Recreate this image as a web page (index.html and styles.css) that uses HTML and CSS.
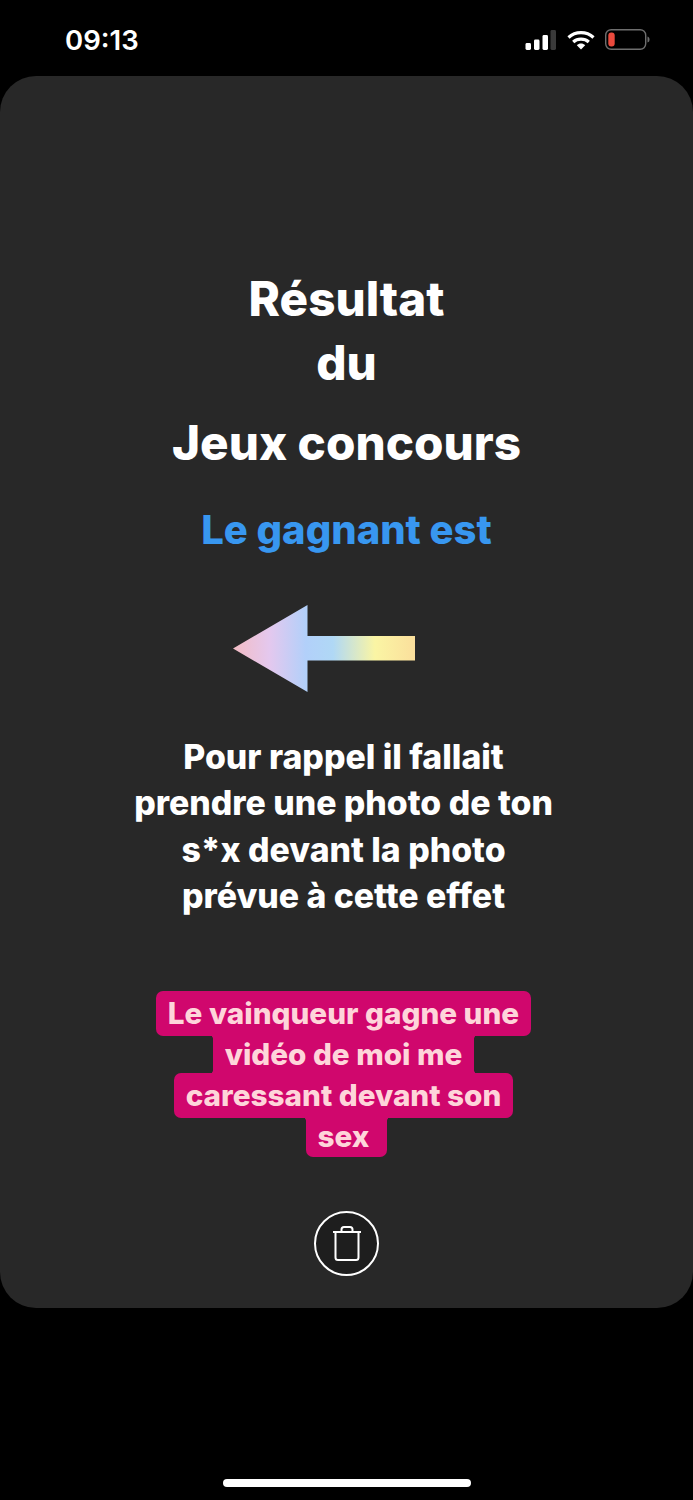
FILE: index.html
```html
<!DOCTYPE html>
<html lang="fr">
<head>
    <meta charset="UTF-8">
    <title>Résultat du Jeux concours</title>
    <meta name="viewport" content="width=device-width, initial-scale=1.0">
    <link rel="stylesheet" href="styles.css">
</head>
<body>
    <div class="status-bar">
        <span class="time">09:13</span>
        <div class="status-icons">
            <svg class="signal" width="32" height="20" viewBox="0 0 32 20">
                <rect x="0.500" y="13" width="5.500" height="7" rx="1.400" fill="#fff"/>
                <rect x="9" y="9.500" width="5.500" height="10.500" rx="1.400" fill="#fff"/>
                <rect x="17.500" y="5" width="5.500" height="15" rx="1.400" fill="#fff"/>
                <rect x="25.500" y="0" width="5.500" height="20" rx="1.400" fill="#3a3a3a"/>
            </svg>
            <svg class="wifi" width="28" height="20" viewBox="0 0 28 20">
                <path d="M1.500 7.500C8.500 1 19.500 1 26.500 7.500" fill="none" stroke="#fff" stroke-width="3.200"/>
                <path d="M6.200 12C10.500 8.200 17.500 8.200 21.800 12" fill="none" stroke="#fff" stroke-width="3.200"/>
                <path d="M9.800 15.200L14 19.600L18.200 15.200C15.800 13 12.200 13 9.800 15.200Z" fill="#fff"/>
            </svg>
            <svg class="battery" width="45" height="21" viewBox="0 0 45 21">
                <rect x="0.700" y="0.700" width="40" height="19.600" rx="5.500" fill="none" stroke="#6e6e6e" stroke-width="1.400"/>
                <rect x="3.300" y="3.500" width="6.400" height="14" rx="3" fill="#ea4a3d"/>
                <path d="M42.500 7.500C44 8 44.500 9 44.500 10.500C44.500 12 44 13 42.500 13.500Z" fill="#6e6e6e"/>
            </svg>
        </div>
    </div>

    <div class="card">
        <h1 class="title">
            <span class="title-line">Résultat</span>
            <span class="title-line">du</span>
            <span class="title-line title-last">Jeux concours</span>
        </h1>
        <h2 class="winner">Le gagnant est</h2>

        <svg class="arrow" width="184" height="90" viewBox="0 0 184 90">
            <defs>
                <linearGradient id="arrowGrad" x1="0" y1="0" x2="1" y2="0">
                    <stop offset="0" stop-color="#f3bcc4"/>
                    <stop offset="0.2" stop-color="#e4c8ee"/>
                    <stop offset="0.4" stop-color="#b2d0fa"/>
                    <stop offset="0.55" stop-color="#b0d8f5"/>
                    <stop offset="0.78" stop-color="#faf5a4"/>
                    <stop offset="1" stop-color="#fbdf9c"/>
                </linearGradient>
            </defs>
            <path d="M1 44.500L75.500 1V32H183V56.500H75.500V88Z" fill="url(#arrowGrad)"/>
        </svg>

        <p class="reminder">
            Pour rappel il fallait<br>
            prendre une photo de ton<br>
            s*x devant la photo<br>
            prévue à cette effet
        </p>

        <div class="prize">
            <div class="prize-line">Le vainqueur gagne une</div>
            <div class="prize-line inset">vidéo de moi me</div>
            <div class="prize-line">caressant devant son</div>
            <div class="prize-line inset inset-last">sex</div>
        </div>

        <button class="delete-btn" type="button" aria-label="Supprimer">
            <svg width="30" height="38" viewBox="0 0 30 38">
                <path d="M1 7H29" fill="none" stroke="#fff" stroke-width="2"/>
                <path d="M3.500 7V32.500C3.500 34 4.500 35 6 35H24C25.500 35 26.500 34 26.500 32.500V7" fill="none" stroke="#fff" stroke-width="2"/>
                <path d="M9.500 7V4.500C9.500 3 10.500 2 12 2H18C19.500 2 20.500 3 20.500 4.500V7" fill="none" stroke="#fff" stroke-width="2"/>
            </svg>
        </button>
    </div>

    <div class="home-area">
        <div class="home-indicator"></div>
    </div>
</body>
</html>
```

FILE: styles.css
```css
body {
    margin: 0;
    width: 693px;
    height: 1500px;
    overflow: hidden;
    background: #000;
    color: #fff;
    font-family: Inter, 'Liberation Sans', sans-serif;
}
.status-bar {
    height: 76px;
    box-sizing: border-box;
    padding: 0 43px 0 65px;
    display: flex;
    justify-content: space-between;
    align-items: flex-start;
}
.time {
    margin-top: 23px;
    font-size: 27.500px;
    line-height: 34px;
    font-weight: 600;
}
.status-icons {
    margin-top: 29px;
    display: flex;
    align-items: center;
    gap: 10px;
}
.card {
    height: 1232px;
    box-sizing: border-box;
    padding-top: 191px;
    background: #282828;
    border-radius: 36px;
    display: flex;
    flex-direction: column;
    align-items: center;
}
.title {
    margin: 0;
    font-size: 47.600px;
    font-weight: 800;
    text-align: center;
}
.title-line {
    display: block;
    line-height: 64px;
}
.title-last {
    margin-top: 16px;
}
.winner {
    margin: 30px 0 0;
    color: #3897f0;
    font-size: 40px;
    line-height: 50px;
    font-weight: 800;
}
.arrow {
    display: block;
    margin: 49px 0 0 -45px;
}
.reminder {
    margin: 40px 0 0 -6px;
    font-size: 33.800px;
    line-height: 46.300px;
    font-weight: 800;
    text-align: center;
}
.prize {
    margin: 72px 0 0 -6px;
    display: flex;
    flex-direction: column;
    align-items: center;
    font-size: 29.700px;
    line-height: 41px;
    font-weight: 800;
    color: #fed5da;
}
.prize-line {
    position: relative;
    padding: 2px 11.500px;
    background: #d0076d;
    border-radius: 7px;
    margin-bottom: -4px;
}
.prize-line:last-child {
    margin-bottom: 0;
    padding-bottom: 0;
}
.inset {
    border-radius: 0;
    z-index: 1;
}
/* the last line ends on a space in the original, so its box runs wider */
.inset-last {
    border-radius: 0 0 7px 7px;
    padding-right: 17.500px;
    margin-left: 6px;
}
/* concave corners where a narrow line meets a wider one */
.inset::before, .inset::after {
    content: "";
    position: absolute;
    top: 0;
    bottom: 0;
    width: 7px;
    background-repeat: no-repeat;
    background-size: 7px 7px;
}
.inset::before {
    right: 100%;
    background-image: radial-gradient(circle at 0 100%, transparent 6.500px, #d0076d 7px), radial-gradient(circle at 0 0, transparent 6.500px, #d0076d 7px);
    background-position: right top, right bottom;
}
.inset::after {
    left: 100%;
    background-image: radial-gradient(circle at 100% 100%, transparent 6.500px, #d0076d 7px), radial-gradient(circle at 100% 0, transparent 6.500px, #d0076d 7px);
    background-position: left top, left bottom;
}
.inset-last::before, .inset-last::after {
    background-size: 7px 7px, 0 0;
}
.delete-btn {
    margin: 54px 0 0;
    width: 65px;
    height: 65px;
    padding: 0;
    display: flex;
    align-items: center;
    justify-content: center;
    background: #1e1e1e;
    border: 2.500px solid #fff;
    border-radius: 50%;
}
.home-area {
    height: 192px;
    box-sizing: border-box;
    padding-top: 171px;
    display: flex;
    justify-content: center;
}
.home-indicator {
    width: 248px;
    height: 8px;
    background: #fff;
    border-radius: 4px;
}
```
